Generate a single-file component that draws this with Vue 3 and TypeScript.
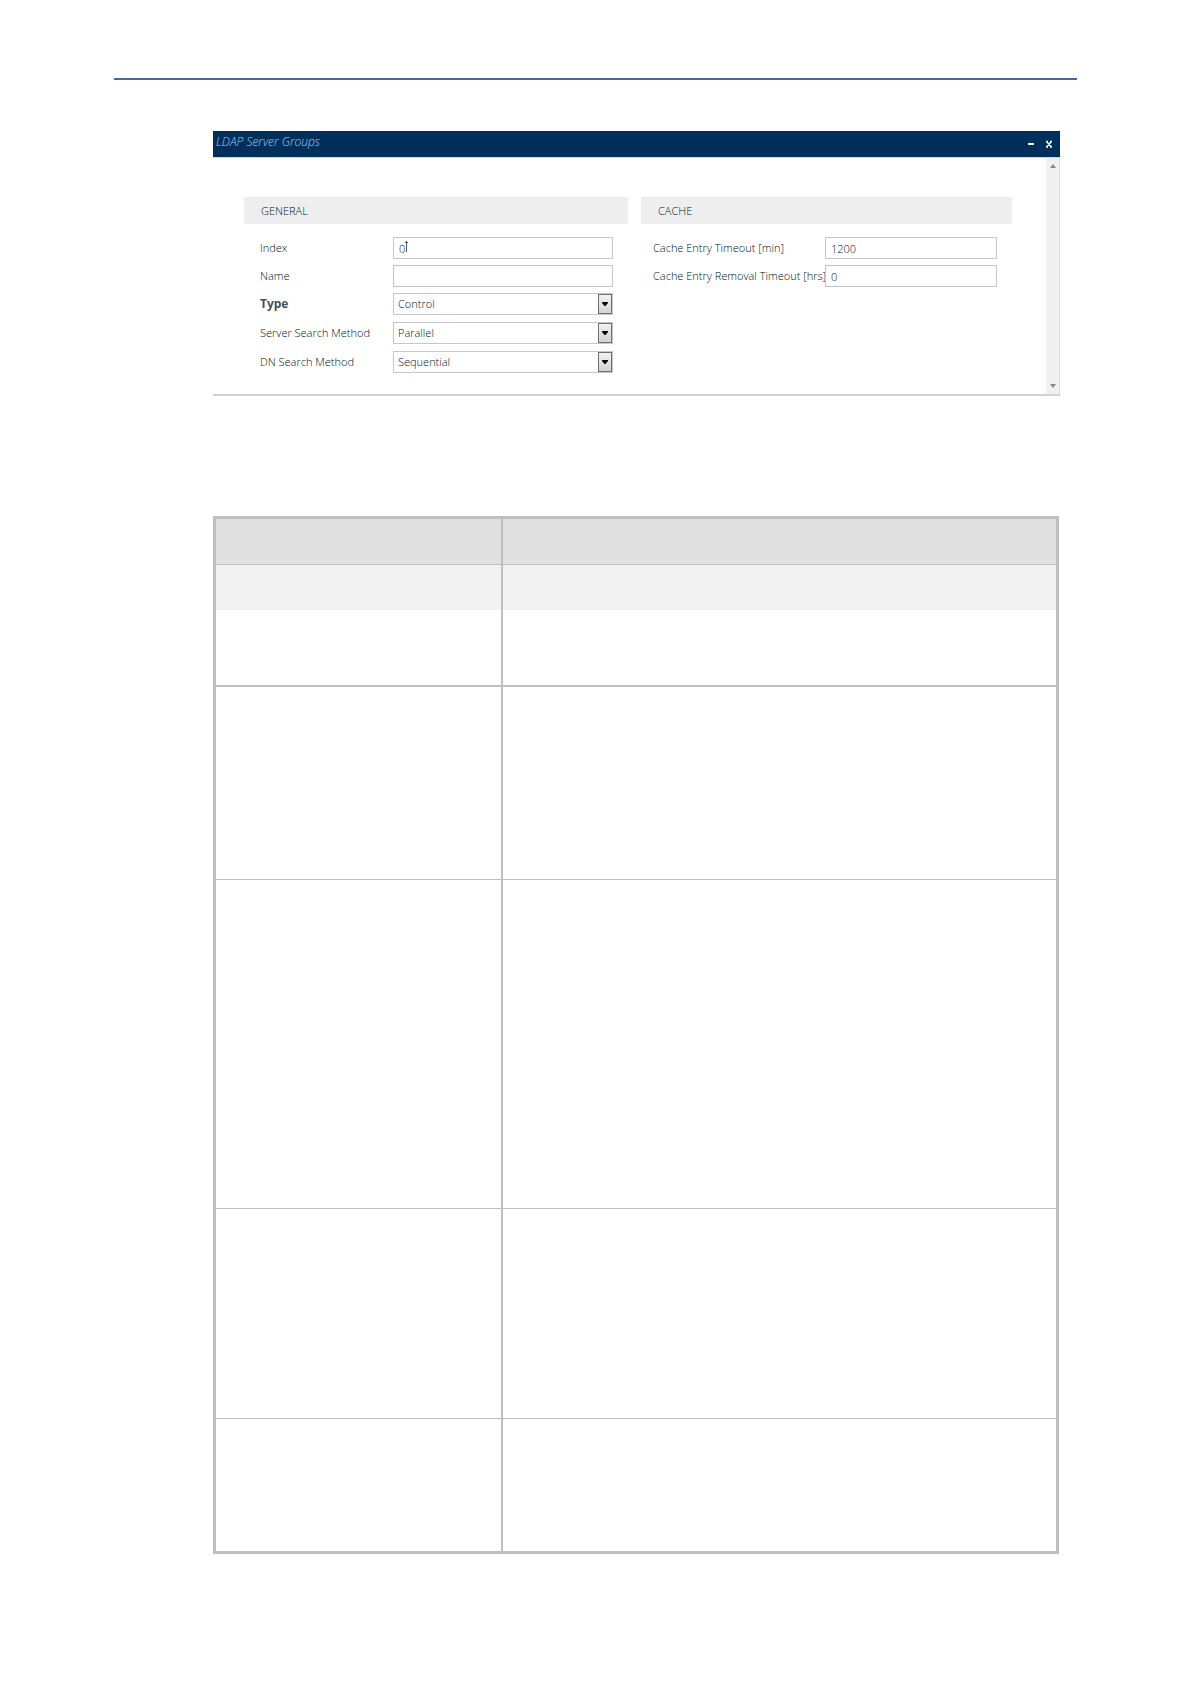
<script setup lang="ts">
import { ref } from 'vue'

interface Field {
  id: string
  label: string
  kind: 'text' | 'select'
  value: string
  strong?: boolean
  caret?: boolean
}

interface Section {
  id: string
  title: string
  fields: Field[]
}

const sections = ref<Section[]>([
  {
    id: 'general',
    title: 'GENERAL',
    fields: [
      { id: 'index', label: 'Index', kind: 'text', value: '0', caret: true },
      { id: 'name', label: 'Name', kind: 'text', value: '' },
      { id: 'type', label: 'Type', kind: 'select', value: 'Control', strong: true },
      { id: 'server-search', label: 'Server Search Method', kind: 'select', value: 'Parallel' },
      { id: 'dn-search', label: 'DN Search Method', kind: 'select', value: 'Sequential' },
    ],
  },
  {
    id: 'cache',
    title: 'CACHE',
    fields: [
      { id: 'timeout', label: 'Cache Entry Timeout [min]', kind: 'text', value: '1200' },
      { id: 'removal', label: 'Cache Entry Removal Timeout [hrs]', kind: 'text', value: '0' },
    ],
  },
])

const rows = ['short', 'type', 'server', 'dn', 'timeout']
</script>

<template>
  <main class="page">
    <hr class="rule" />

    <section class="dialog">
      <header class="titlebar">
        <h1 class="title">LDAP Server Groups</h1>
        <div class="controls">
          <button type="button" class="control" aria-label="Minimize">
            <svg width="6" height="8" viewBox="0 0 6 8"><path d="M0 4h6" stroke="#fff" stroke-width="2" /></svg>
          </button>
          <button type="button" class="control" aria-label="Close">
            <svg width="6" height="8" viewBox="0 0 6 8">
              <path d="M0.500 1.500L5.500 7M5.500 1.500L0.500 7M0 1.500h2M4 1.500h2M0 7h2M4 7h2" stroke="#fff" stroke-width="1.400" />
            </svg>
          </button>
        </div>
      </header>

      <div class="body">
        <form class="form" @submit.prevent>
          <fieldset v-for="section in sections" :key="section.id" class="group" :class="section.id">
            <h2 class="group-title">{{ section.title }}</h2>
            <div class="fields">
              <div v-for="field in section.fields" :key="field.id" class="field" :class="field.kind">
                <label class="label" :class="{ strong: field.strong }" :for="field.id">{{ field.label }}</label>
                <div class="box">
                  <input v-if="field.kind === 'text'" :id="field.id" v-model="field.value" class="input" type="text" />
                  <template v-else>
                    <select :id="field.id" v-model="field.value" class="input choice">
                      <option>{{ field.value }}</option>
                    </select>
                    <span class="arrow" aria-hidden="true">
                      <svg width="6" height="4" viewBox="0 0 6 4"><path d="M0 0h6v1L3.500 4h-1L0 1z" fill="#000" /></svg>
                    </span>
                  </template>
                  <svg v-if="field.caret" class="caret" width="3" height="11" viewBox="0 0 3 11" aria-hidden="true">
                    <path d="M0 1.500h3M1.500 0v11" stroke="#4c626e" fill="none" />
                  </svg>
                </div>
              </div>
            </div>
          </fieldset>
        </form>
        <div class="scrollbar" aria-hidden="true">
          <svg width="6" height="4" viewBox="0 0 6 4"><path d="M3 0L6 4H0z" fill="#888" /></svg>
          <svg width="6" height="4" viewBox="0 0 6 4"><path d="M3 4L6 0H0z" fill="#888" /></svg>
        </div>
      </div>
    </section>

    <table class="params">
      <thead>
        <tr class="head"><th scope="col"></th><th scope="col"></th></tr>
      </thead>
      <tbody>
        <tr class="subhead"><td></td><td></td></tr>
        <tr v-for="row in rows" :key="row" :class="row"><td></td><td></td></tr>
      </tbody>
    </table>
  </main>
</template>

<style>
body {
  margin: 0;
  background: #fff;
}
</style>

<style scoped>
.page {
  box-sizing: border-box;
  padding: 78px 114px 130px;
  font-family: 'Open Sans', 'Noto Sans', sans-serif;
  font-size: 11px;
  line-height: 16px;
  font-weight: 300;
  color: #001220;
}
.rule {
  height: 2px;
  margin: 0;
  border: 0;
  background: #4169a4;
}
.dialog {
  margin: 51px 17px 0 99px;
  border-bottom: 2px solid #d2d2d2;
}
.titlebar {
  display: flex;
  justify-content: space-between;
  height: 26px;
  background: #002f5b;
  border-bottom: 1px solid #bcdcf2;
}
.title {
  margin: 3px 0 0 3px;
  font-size: 12px;
  line-height: 16px;
  font-weight: 300;
  font-style: italic;
  color: #9ad2ff;
}
.controls {
  display: flex;
  align-items: center;
  gap: 12px;
  padding-right: 8px;
}
.control {
  display: flex;
  padding: 0;
  border: 0;
  background: none;
}
.body {
  display: flex;
}
.form {
  flex: 1;
  display: flex;
  align-items: flex-start;
  gap: 13px;
  padding: 39px 34px 20px 31px;
}
.group {
  min-width: 0;
  margin: 0;
  padding: 0;
  border: 0;
}
.general {
  flex: 384 1 0;
}
.cache {
  flex: 371 1 0;
}
.group-title {
  margin: 0;
  padding: 0 17px;
  font-size: 11px;
  line-height: 27px;
  font-weight: 300;
  background: #eee;
}
.fields {
  display: flex;
  flex-direction: column;
  gap: 6px;
  padding: 13px 15px 0 16px;
}
.cache .fields {
  padding-left: 12px;
}
.field {
  display: flex;
  align-items: flex-start;
}
.field.select {
  height: 23px;
}
.label {
  flex: none;
  width: 133px;
  line-height: 22px;
  white-space: nowrap;
}
.cache .label {
  width: 172px;
}
.strong {
  font-size: 12px;
  font-weight: 700;
  color: #43505a;
}
.box {
  position: relative;
  flex: 1;
  min-width: 0;
  display: flex;
}
.input {
  box-sizing: border-box;
  width: 100%;
  min-width: 0;
  height: 22px;
  margin: 0;
  padding: 0 5px;
  border: 1px solid #c4c7c9;
  border-radius: 0;
  background: transparent;
  font: inherit;
  color: inherit;
}
.choice {
  padding: 0 18px 0 4px;
  appearance: none;
}
.arrow {
  position: absolute;
  top: 1px;
  right: 1px;
  box-sizing: border-box;
  display: flex;
  align-items: center;
  justify-content: center;
  width: 14px;
  height: 20px;
  border: 1px solid #707070;
  background: linear-gradient(#f2f2f2, #d2d2d2);
  pointer-events: none;
}
.caret {
  position: absolute;
  top: 4px;
  left: 12px;
}
.scrollbar {
  box-sizing: border-box;
  display: flex;
  flex-direction: column;
  align-items: center;
  justify-content: space-between;
  width: 14px;
  padding: 6px 0;
  background: #f0f0f0;
  border-right: 1px solid #dcdce0;
}
.params {
  width: calc(100% - 117px);
  margin: 120px 0 0 99px;
  table-layout: fixed;
  border: 3px solid #bfbfbf;
  border-spacing: 0;
}
.params th,
.params td {
  padding: 0;
  border-bottom: 1px solid #bfbfbf;
}
.params th:first-child,
.params td:first-child {
  width: 285px;
  border-right: 2px solid #bfbfbf;
}
.head {
  height: 46px;
  background: #e0e0e0;
}
.subhead {
  height: 45px;
  background: #f1f1f1;
}
.params .subhead td {
  border-bottom: 0;
}
.short {
  height: 77px;
}
.params .short td {
  border-bottom-width: 2px;
}
.type {
  height: 193px;
}
.server {
  height: 329px;
}
.dn {
  height: 210px;
}
.timeout {
  height: 132px;
}
.params .timeout td {
  border-bottom: 0;
}
</style>
